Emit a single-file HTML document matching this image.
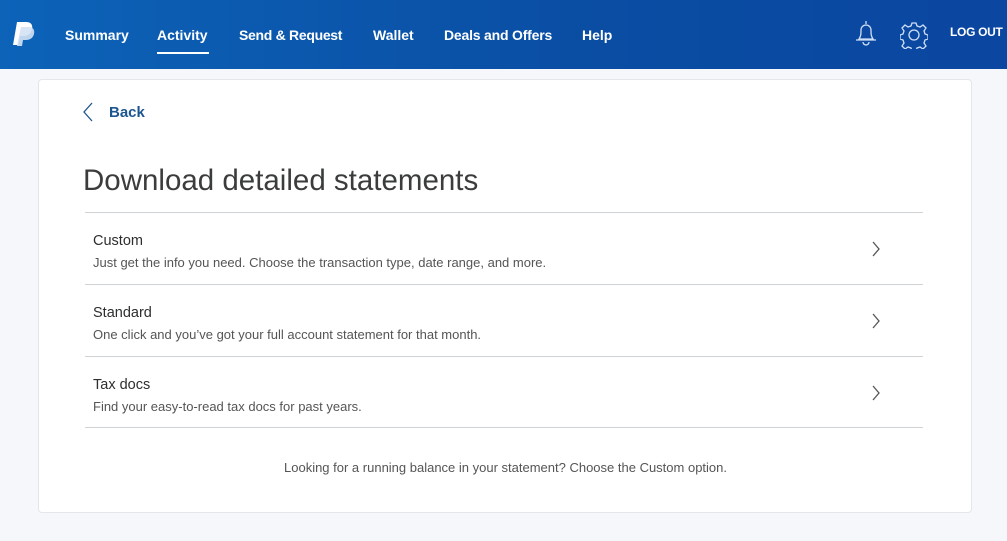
<!DOCTYPE html>
<html><head><style>
*{margin:0;padding:0;box-sizing:border-box}
body{width:1007px;height:541px;background:#f5f7fa;font-family:"Liberation Sans",sans-serif;overflow:hidden;position:relative}
.hdr{position:absolute;left:0;top:0;width:1007px;height:69px;background:linear-gradient(90deg,#0c63b8,#0a4da3 60%,#0b46a0)}
.nav{position:absolute;top:27px;color:#fff;font-weight:bold;font-size:14px;white-space:nowrap}
.ul{position:absolute;left:157px;top:52px;width:52px;height:1.5px;background:#fff}
.card{position:absolute;left:38px;top:79px;width:934px;height:434px;background:#fff;border:1px solid #e3e6ea;border-radius:4px}
.back{position:absolute;left:109px;top:104px;color:#1c5590;font-weight:bold;font-size:15px}
h1{position:absolute;left:83px;top:164px;font-weight:normal;font-size:29.5px;color:#3a3c3d;white-space:nowrap}
.row{position:absolute;left:85px;width:838px;height:72px;border-top:1px solid #cfd3d6}
.t{position:absolute;left:8px;top:20px;font-size:14.5px;color:#2c2e2f}
.s{position:absolute;left:8px;top:42px;font-size:13px;color:#555;white-space:nowrap}
.chev{position:absolute;left:786px;top:27px}
.foot{position:absolute;left:0;width:1007px;top:460px;text-align:center;font-size:13px;color:#555;padding-left:4px}
</style></head><body>
<div class="hdr">
<svg style="position:absolute;left:11px;top:21px" width="26" height="26" viewBox="0 0 26 26"><path d="M6 1h9c5 0 7 3 6 7-1 5-4 7-9 7H9l-2 9H2z" fill="#fff"/><path d="M10 6h8c4 0 6 3 5 7-1 4-4 6-8 6h-3l-1 6H6z" fill="#d4e2f4" opacity=".9"/></svg>
<div class="nav" style="left:65px">Summary</div>
<div class="nav" style="left:157px">Activity</div>
<div class="ul"></div>
<div class="nav" style="left:239px;letter-spacing:-0.3px">Send &amp; Request</div>
<div class="nav" style="left:373px">Wallet</div>
<div class="nav" style="left:444px;letter-spacing:-0.2px">Deals and Offers</div>
<div class="nav" style="left:582px">Help</div>
<svg style="position:absolute;left:853px;top:20px" width="26" height="26" viewBox="0 0 26 26" fill="none" stroke="#cfe0f6" stroke-width="1.3"><path d="M13 1v3M6 19c2-3 2-5 2-9a5 5 0 0 1 10 0c0 4 0 6 2 9zM3 20h20M10 22a3 3 0 0 0 6 0"/></svg>
<svg style="position:absolute;left:900px;top:21px" width="28" height="28" viewBox="0 0 28 28" fill="none" stroke="#cfe0f6" stroke-width="1.3"><path d="M12 2h4l1 3 3 1 3-2 3 3-2 3 1 3 3 1v4l-3 1-1 3 2 3-3 3-3-2-3 1-1 3h-4l-1-3-3-1-3 2-3-3 2-3-1-3-3-1v-4l3-1 1-3-2-3 3-3 3 2 3-1z"/><circle cx="14" cy="14" r="5"/></svg>
<div class="nav" style="left:950px;top:25px;font-size:12px;letter-spacing:-0.3px">LOG OUT</div>
</div>
<div class="card"></div>
<svg style="position:absolute;left:82px;top:102px" width="12" height="20" viewBox="0 0 12 20" fill="none" stroke="#1c5590" stroke-width="1.3"><path d="M10 1 2 10l8 9"/></svg>
<div class="back">Back</div>
<h1>Download detailed statements</h1>
<div class="row" style="top:212px"><div class="t">Custom</div><div class="s">Just get the info you need. Choose the transaction type, date range, and more.</div><svg class="chev" width="10" height="18" viewBox="0 0 10 18" fill="none" stroke="#555" stroke-width="1.3"><path d="M2 2l6 7-6 7"/></svg></div>
<div class="row" style="top:284px"><div class="t">Standard</div><div class="s">One click and you’ve got your full account statement for that month.</div><svg class="chev" width="10" height="18" viewBox="0 0 10 18" fill="none" stroke="#555" stroke-width="1.3"><path d="M2 2l6 7-6 7"/></svg></div>
<div class="row" style="top:356px;border-bottom:1px solid #cfd3d6"><div class="t">Tax docs</div><div class="s">Find your easy-to-read tax docs for past years.</div><svg class="chev" width="10" height="18" viewBox="0 0 10 18" fill="none" stroke="#555" stroke-width="1.3"><path d="M2 2l6 7-6 7"/></svg></div>
<div class="foot">Looking for a running balance in your statement? Choose the Custom option.</div>
</body></html>
